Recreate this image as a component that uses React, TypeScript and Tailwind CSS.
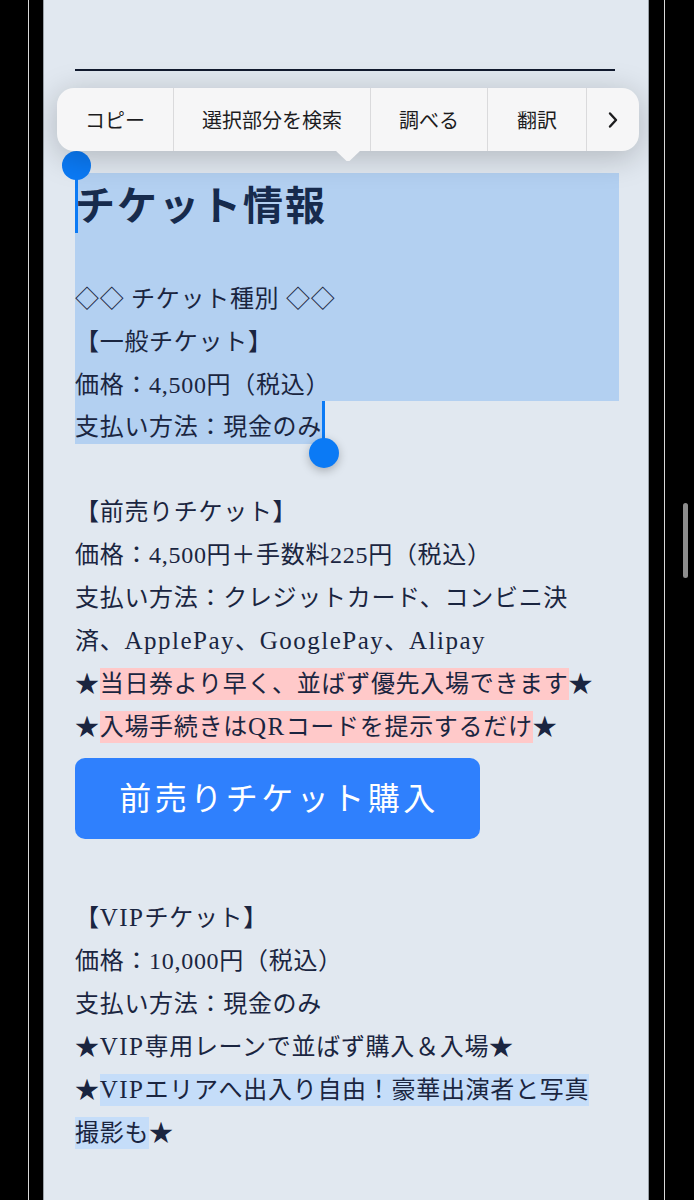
import React from "react";

const Line = ({ children }: { children: React.ReactNode }) => (
  <div className="whitespace-nowrap">{children}</div>
);

const L = ({ children }: { children: React.ReactNode }) => (
  <span className="text-[25px] leading-none tracking-[1.5px]">{children}</span>
);

export default function App() {
  return (
    <div className="relative flex h-[1200px] w-[694px] overflow-hidden bg-black">
      <div className="w-[28px] shrink-0 bg-black" />
      <div className="w-px shrink-0 bg-[#d9d9d9]" />
      <div className="w-[14px] shrink-0 bg-black" />
      <div className="w-px shrink-0 bg-[#9aa1a8]" />
      <main className="relative w-[604px] shrink-0 bg-[#e1e8f0] pl-[31px] pt-[69px] font-['Liberation_Serif','Noto_Sans_CJK_JP',serif] text-[#1a2540]">
        <div className="h-[2px] w-[540px] bg-[#111a2e]" />

        <div className="mt-[102px] w-[544px] bg-[#b3d0f1]">
          <h1 className="h-[68px] text-[40px] font-bold leading-[68px] tracking-[2px] text-[#172b4d]">
            チケット情報
          </h1>
          <div className="relative top-[6px] mt-[31.4px] text-[24px] leading-[42.8px] tracking-[0.7px]">
            <Line>◇◇ チケット種別 ◇◇</Line>
            <Line>【一般チケット】</Line>
            <Line>価格：4,500円（税込）</Line>
          </div>
        </div>

        <div className="text-[24px] leading-[43px] tracking-[0.7px]">
          <div className="h-[43px] w-[247px] whitespace-nowrap bg-[#b3d0f1]">
            <span className="relative top-[5px]">支払い方法：現金のみ</span>
          </div>
          <div className="h-[47.4px]" />
          <Line>【前売りチケット】</Line>
          <Line>価格：4,500円＋手数料225円（税込）</Line>
          <Line>支払い方法：クレジットカード、コンビニ決</Line>
          <Line>
            済、<L>ApplePay</L>、<L>GooglePay</L>、<L>Alipay</L>
          </Line>
          <Line>
            ★<span className="bg-[#ffc9c9] py-[3px]">当日券より早く、並ばず優先入場できます</span>★
          </Line>
          <Line>
            ★<span className="bg-[#ffc9c9] py-[3px]">入場手続きは<L>QR</L>コードを提示するだけ</span>★
          </Line>
        </div>

        <button className="mt-[9px] flex h-[81px] w-[405px] items-center justify-center rounded-[10px] bg-[#2f80fd] pl-[3px] text-[32px] tracking-[3.5px] text-white">
          前売りチケット購入
        </button>

        <div className="mt-[57.4px] text-[24px] leading-[43px] tracking-[0.7px]">
          <Line>
            【<L>VIP</L>チケット】
          </Line>
          <Line>価格：10,000円（税込）</Line>
          <Line>支払い方法：現金のみ</Line>
          <Line>
            ★<L>VIP</L>専用レーンで並ばず購入＆入場★
          </Line>
          <Line>
            ★<span className="bg-[#c5ddf9] py-[3px]"><L>VIP</L>エリアへ出入り自由！豪華出演者と写真</span>
          </Line>
          <Line>
            <span className="bg-[#c5ddf9] py-[3px]">撮影も</span>★
          </Line>
        </div>

        {/* selection handles */}
        <div className="absolute left-[31px] top-[165px] h-[68px] w-[3px] bg-[#0b7af5]" />
        <div className="absolute left-[18px] top-[151px] h-[29px] w-[29px] rounded-full bg-[#0b7af5]" />
        <div className="absolute left-[278px] top-[401px] h-[44px] w-[3px] bg-[#0b7af5]" />
        <div className="absolute left-[265px] top-[438px] h-[30px] w-[30px] rounded-full bg-[#0b7af5] shadow-[0_3px_10px_rgba(0,0,0,0.25)]" />

        {/* context menu */}
        <div className="absolute left-[13px] top-[88px] h-[63px] w-[582px] rounded-[17px] bg-[#f6f6f7] font-['Noto_Sans_CJK_JP',sans-serif] text-[20px] text-[#1c1c1e] shadow-[0_6px_32px_rgba(0,0,0,0.22)]">
          <div className="flex h-full">
            <div className="flex w-[117px] items-center justify-center border-r border-[#dadadc]">コピー</div>
            <div className="flex w-[197px] items-center justify-center border-r border-[#dadadc]">選択部分を検索</div>
            <div className="flex w-[117px] items-center justify-center border-r border-[#dadadc]">調べる</div>
            <div className="flex w-[99px] items-center justify-center border-r border-[#dadadc]">翻訳</div>
            <div className="flex w-[52px] items-center justify-center">
              <svg width="12" height="18" viewBox="0 0 12 18">
                <polyline points="3,2.5 9,9 3,15.5" fill="none" stroke="#1c1c1e" strokeWidth="2.4" strokeLinecap="round" strokeLinejoin="round" />
              </svg>
            </div>
          </div>
          <svg className="absolute left-[278px] top-[62px]" width="26" height="12" viewBox="0 0 26 12">
            <polygon points="0,0 26,0 14.5,11 11.5,11" fill="#f6f6f7" />
          </svg>
        </div>
      </main>
      <div className="w-px shrink-0 bg-[#9aa1a8]" />
      <div className="w-[15px] shrink-0 bg-black" />
      <div className="w-px shrink-0 bg-[#d9d9d9]" />
      <div className="w-[29px] shrink-0 bg-black" />
      <div className="absolute left-[683px] top-[503px] h-[75px] w-[5px] rounded-full bg-[#8d8d8d]" />
    </div>
  );
}
